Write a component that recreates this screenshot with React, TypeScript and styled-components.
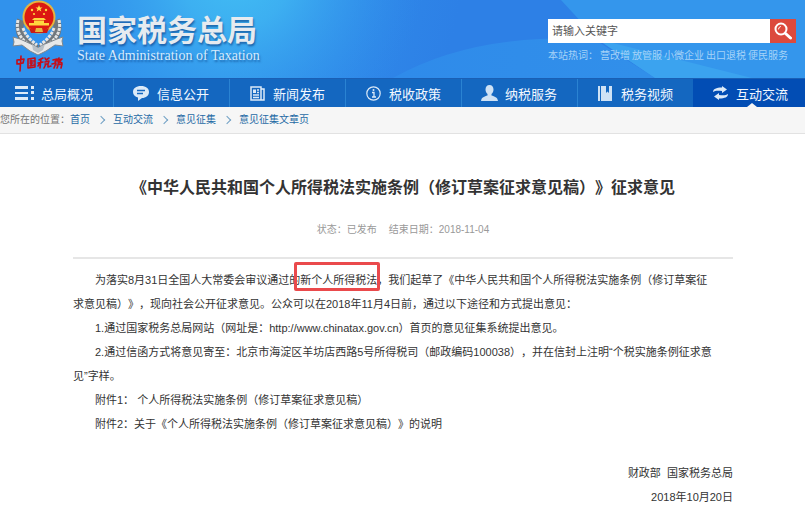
import React from "react";
import styled, { createGlobalStyle } from "styled-components";

const GlobalStyle = createGlobalStyle`
  * { box-sizing: border-box; }
  body {
    margin: 0;
    background: #fff;
    color: #333;
    font-family: "Liberation Sans", "Noto Sans CJK SC", sans-serif;
    text-spacing-trim: space-all;
    overflow-x: hidden;
  }
  h1, p, ul, ol { margin: 0; padding: 0; list-style: none; }
  a { color: inherit; text-decoration: none; }
`;

const Header = styled.header`
  position: relative;
  display: flex;
  justify-content: space-between;
  min-height: 78px;
  padding: 0 9px 0 12px;
  background: #2f8dea;
`;

const Backdrop = styled.svg`
  position: absolute;
  inset: 0;
  width: 100%;
  height: 100%;
`;

const Brand = styled.a`
  position: relative;
  display: flex;
  gap: 12px;
`;

const BrandText = styled.div`
  display: flex;
  flex-direction: column;
  padding-top: 14px;
  white-space: nowrap;
  text-shadow: 1px 2px 2px rgba(10, 60, 130, 0.6);
`;

const BrandName = styled.span`
  font-size: 30px;
  font-weight: 700;
  line-height: 34px;
  color: #e6ebf0;
`;

const BrandSub = styled.span`
  font-family: "Liberation Serif", serif;
  font-size: 14px;
  line-height: 15px;
  color: #d6eafc;
`;

const SearchArea = styled.div`
  position: relative;
  width: 248px;
  padding-top: 19px;
`;

const SearchForm = styled.form`
  display: flex;
  height: 24px;
`;

const SearchInput = styled.input`
  flex: 1;
  min-width: 0;
  padding: 0 4px;
  border: 0;
  border-radius: 0;
  background: #fff;
  font: 11px "Liberation Sans", "Noto Sans CJK SC", sans-serif;
  color: #555;
  &::placeholder { color: #555; opacity: 1; }
`;

const SearchButton = styled.button`
  display: flex;
  align-items: center;
  justify-content: center;
  width: 26px;
  padding: 0;
  border: 0;
  background: #dc4a3d;
`;

const HotWords = styled.p`
  display: flex;
  gap: 2px;
  margin-top: 5px;
  font-size: 10px;
  line-height: 16px;
  color: #a5d3f8;
  white-space: nowrap;
`;

const Nav = styled.nav`
  display: grid;
  grid-template-columns: 113fr repeat(5, 116fr) 112fr;
  border-top: 1px solid #1a5fb5;
  background: #1467c0;
`;

const NavItem = styled.a<{ $first?: boolean; $active?: boolean }>`
  position: relative;
  display: flex;
  align-items: center;
  gap: 4px;
  height: 28px;
  padding-left: ${(p) => (p.$first ? 13 : 15)}px;
  border-left: ${(p) => (p.$first || p.$active ? "0" : "1px solid #2a83d2")};
  background: ${(p) => (p.$active ? "#024db4" : "transparent")};
  color: #f2f8ff;
  font-size: 13px;
  white-space: nowrap;
  svg { display: block; }
`;

const IconSlot = styled.span`
  display: flex;
  justify-content: center;
  width: 24px;
`;

const Pointer = styled.i`
  position: absolute;
  left: 54px;
  bottom: 0;
  border: 5px solid transparent;
  border-top: 0;
  border-bottom: 4px solid #f6f6f6;
`;

const Crumbs = styled.nav`
  display: flex;
  align-items: center;
  height: 27px;
  border-bottom: 1px solid #e2e2e2;
  background: #f6f6f6;
  font-size: 10px;
  line-height: 16px;
  color: #777;
  white-space: nowrap;
  ol { display: flex; }
  li { display: flex; align-items: center; }
  li + li::before {
    content: "";
    width: 5px;
    height: 5px;
    margin: 0 9px 0 8px;
    border: solid #6f9fc4;
    border-width: 1px 1px 0 0;
    transform: rotate(45deg);
  }
  a { color: #1f6aa5; }
`;

const Article = styled.main`
  padding: 41px 72px 0 73px;
`;

const Title = styled.h1`
  font-size: 16px;
  line-height: 26px;
  font-weight: 700;
  text-align: center;
`;

const Meta = styled.p`
  display: flex;
  justify-content: center;
  gap: 12px;
  padding: 21px 0 19px;
  border-bottom: 2px solid #e6e6e6;
  font-size: 10px;
  line-height: 16px;
  color: #999;
`;

const Body = styled.div`
  padding-top: 9px;
  font-size: 11px;
  line-height: 24px;
`;

const Para = styled.p`
  text-indent: 2em;
  white-space: nowrap;
`;

const Marked = styled.span`
  position: relative;
`;

const MarkFrame = styled.span`
  position: absolute;
  inset: -12px -3px -5px -6px;
  border: 3px solid #ea4a4c;
  border-radius: 2px;
`;

const Signature = styled.div`
  padding-top: 25px;
  text-align: right;
`;

const Emblem = () => (
  <svg width="53" height="73" viewBox="0 0 53 73" aria-label="中国税务">
    <g fill="none" stroke="#70777d" strokeWidth="8">
      <path d="M9 20C4 33 12 43 25 49" />
      <path d="M44 20C49 33 41 43 28 49" />
    </g>
    <g fill="none" stroke="#e4e5e5" strokeWidth="3" strokeDasharray="3 1">
      <path d="M6 20C3 33 11 43 25 49" />
      <path d="M47 20C50 33 42 43 28 49" />
      <path d="M11 28C14 37 20 41 25 45" />
      <path d="M42 28C39 37 33 41 28 45" />
    </g>
    <path d="M1 37l7 2 11 5 7 4 7-4 12-5 6-2-1 4 1 5-8-1-9 6-8 4-8-4-8-6-9 1 1-4z" fill="#e8e9e9" stroke="#7f878d" />
    <path d="M20 44l6 4 7-4-2 6-5 3-5-3z" fill="#b7c0c7" />
    <circle cx="27" cy="17" r="16.500" fill="#e6b43e" />
    <circle cx="27" cy="17" r="14.500" fill="#dc1812" />
    <path d="M27 5l1 2.500h2.500l-2 1.500.8 2.500-2.300-1.500-2.300 1.500.8-2.500-2-1.500H26z" fill="#ffe24a" />
    <g fill="#ffd63f">
      <circle cx="20" cy="10" r="1.200" />
      <circle cx="34" cy="10" r="1.200" />
      <circle cx="22" cy="14" r="1.100" />
      <circle cx="32" cy="14" r="1.100" />
      <path d="M22 18h10l2 2H20zM22 20.500h10V23H22zM17 23h20v2.500H17z" />
    </g>
    <path d="M17 28q10 6 20 0l-2 5H19z" fill="#c91c13" />
    <path d="M24 28h6l1 4h-8z" fill="#e8b63f" />
    <g fill="none" stroke="#c60d18" strokeWidth="1.600" strokeLinecap="round" strokeLinejoin="round">
      <path d="M5 60l7-1-1 4-6 1zM9 56l-1 15" />
      <path d="M16 59l7-1 0 9-7 1zM18 61h4M19 60v5M18 63h3M18 66l4-1" />
      <path d="M27 60l4-2M26 63l5-1M29 59l-1 9M28 63l-2 3M33 58l1 2 3-2M33 62l4-1-1 3-3 0M34 64l-2 4M36 64l0 3 3-1" />
      <path d="M41 60l4-1-2 3M40 64l4-1-2 5M47 58l-2 3M46 60l4-1-4 4M46 61l4 2M45 65l5-1-1 4M47 63l-2 5" />
    </g>
  </svg>
);

const icons: Record<string, React.ReactNode> = {
  list: (
    <svg width="20" height="14" viewBox="0 0 20 14" fill="#dceaf8">
      <path d="M0 0h13v3H0zM0 6h13v2H0zM0 11h13v3H0zM16 0h3v3h-3zM16 5h3v3h-3zM16 11h3v3h-3z" />
    </svg>
  ),
  chat: (
    <svg width="16" height="15" viewBox="0 0 16 15">
      <path d="M8 0c5 0 8 2.500 8 6s-3 6-7 6l-4 3v-3.500C2 10.500 0 9 0 6c0-3.500 3-6 8-6z" fill="#dceaf8" />
      <path d="M4 4.500h8M4 7.500h6" stroke="#1467c0" strokeWidth="1.300" />
    </svg>
  ),
  news: (
    <svg width="15" height="15" viewBox="0 0 15 15" fill="none" stroke="#dceaf8" strokeWidth="1.500">
      <path d="M1 1h10v13H1zM11 3h3v11h-4M3 9h6M3 11.500h6M7 4h2M7 6.500h2" />
      <path d="M3 3.500h3v3.500H3z" fill="#dceaf8" stroke="none" />
    </svg>
  ),
  info: (
    <svg width="15" height="15" viewBox="0 0 15 15" fill="none" stroke="#dceaf8">
      <circle cx="7.500" cy="7.500" r="6.700" strokeWidth="1.200" />
      <path d="M6 6.500h2V11M6 11h4" strokeWidth="1.300" />
      <circle cx="7.500" cy="4" r="1" fill="#dceaf8" stroke="none" />
    </svg>
  ),
  user: (
    <svg width="17" height="16" viewBox="0 0 17 16" fill="#cfe2f5">
      <path d="M8.500 0C11 0 12.500 1.800 12.500 4.500c0 2-1 3.500-2 4.500v1.500c3 1 6 1.500 6.500 5.500H0c.5-4 3.500-4.500 6.500-5.500V9c-1-1-2-2.500-2-4.500C4.500 1.800 6 0 8.500 0z" />
    </svg>
  ),
  book: (
    <svg width="14" height="15" viewBox="0 0 14 15" fill="#cfe2f5">
      <path d="M0 0h2v15H0zM3 0h5v7l1.500-1.500L11 7V0h3v15H3z" />
    </svg>
  ),
  swap: (
    <svg width="15" height="14" viewBox="0 0 15 14" fill="#dceaf8">
      <path d="M0 6c0-3 3-4.500 9-4.500V0l5 3.500L9 7V5C5 4.500 2 4.500 0 6zM15 8c0 3-3 4.500-9 4.500V14l-5-3.500L6 7v2c4 .5 7 .5 9-1z" />
    </svg>
  ),
};

const navItems = [
  { icon: "list", label: "总局概况" },
  { icon: "chat", label: "信息公开" },
  { icon: "news", label: "新闻发布" },
  { icon: "info", label: "税收政策" },
  { icon: "user", label: "纳税服务" },
  { icon: "book", label: "税务视频" },
  { icon: "swap", label: "互动交流" },
];

const hotWords = ["营改增", "放管服", "小微企业", "出口退税", "便民服务"];
const crumbs = ["首页", "互动交流", "意见征集", "意见征集文章页"];

export default function App() {
  return (
    <>
      <GlobalStyle />
      <Header>
        <Backdrop viewBox="0 0 805 78" preserveAspectRatio="none" aria-hidden="true">
          <defs>
            <linearGradient id="base" gradientUnits="userSpaceOnUse" x1="240" y1="0" x2="450" y2="50">
              <stop offset="0" stopColor="#3192ec" />
              <stop offset="1" stopColor="#2d80e6" />
            </linearGradient>
            <radialGradient id="glow" gradientUnits="userSpaceOnUse" cx="235" cy="-30" r="190">
              <stop offset="0" stopColor="#42bff4" />
              <stop offset="0.300" stopColor="#3fb5f2" stopOpacity="0.850" />
              <stop offset="1" stopColor="#3192ec" stopOpacity="0" />
            </radialGradient>
            <linearGradient id="disc" gradientUnits="userSpaceOnUse" x1="400" y1="0" x2="640" y2="0">
              <stop offset="0" stopColor="#2f8bea" />
              <stop offset="1" stopColor="#318fea" />
            </linearGradient>
          </defs>
          <rect width="805" height="78" fill="url(#base)" />
          <rect width="805" height="78" fill="url(#glow)" />
          <path d="M561 0H805V78H655L597 39z" fill="#3496ec" />
          <path d="M393 78Q455 43 540 39Q570 37 600 43L655 78z" fill="url(#disc)" />
          <path d="M597 39L752 78H655z" fill="#3ba3ef" />
        </Backdrop>
        <Brand href="#">
          <Emblem />
          <BrandText>
            <BrandName>国家税务总局</BrandName>
            <BrandSub>State Administration of Taxation</BrandSub>
          </BrandText>
        </Brand>
        <SearchArea>
          <SearchForm>
            <SearchInput aria-label="站内搜索" placeholder="请输入关键字" />
            <SearchButton type="submit" aria-label="搜索">
              <svg width="18" height="18" viewBox="0 0 18 18" fill="none" stroke="#fff" strokeLinecap="round">
                <circle cx="7" cy="7" r="5.500" strokeWidth="2" />
                <path d="M11.500 11.500l5 4.500" strokeWidth="3" />
                <path d="M4.500 7Q4.500 5 6.500 4.500" strokeWidth="1" />
              </svg>
            </SearchButton>
          </SearchForm>
          <HotWords>
            <span>本站热词：</span>
            {hotWords.map((w) => (
              <a href="#" key={w}>{w}</a>
            ))}
          </HotWords>
        </SearchArea>
      </Header>
      <Nav aria-label="主导航">
        {navItems.map((n, i) => {
          const active = i === navItems.length - 1;
          return (
            <NavItem href="#" key={n.label} $first={i === 0} $active={active}>
              <IconSlot>{icons[n.icon]}</IconSlot>
              {n.label}
              {active && <Pointer />}
            </NavItem>
          );
        })}
      </Nav>
      <Crumbs aria-label="位置">
        <span>您所在的位置：</span>
        <ol>
          {crumbs.map((c) => (
            <li key={c}><a href="#">{c}</a></li>
          ))}
        </ol>
      </Crumbs>
      <Article>
        <Title>《中华人民共和国个人所得税法实施条例（修订草案征求意见稿）》征求意见</Title>
        <Meta>
          <span>状态：已发布</span>
          <span>结束日期：2018-11-04</span>
        </Meta>
        <Body>
          <Para>
            为落实8月31日全国人大常委会审议通过的
            <Marked>新个人所得税法<MarkFrame /></Marked>
            ，我们起草了《中华人民共和国个人所得税法实施条例（修订草案征
            <br />
            求意见稿）》，现向社会公开征求意见。公众可以在2018年11月4日前，通过以下途径和方式提出意见：
          </Para>
          <Para>1.通过国家税务总局网站（网址是：http://www.chinatax.gov.cn）首页的意见征集系统提出意见。</Para>
          <Para>
            2.通过信函方式将意见寄至：北京市海淀区羊坊店西路5号所得税司（邮政编码100038），并在信封上注明“个税实施条例征求意
            <br />
            见”字样。
          </Para>
          <Para>附件1： 个人所得税法实施条例（修订草案征求意见稿）</Para>
          <Para>附件2：关于《个人所得税法实施条例（修订草案征求意见稿）》的说明</Para>
          <Signature>
            <p>财政部&nbsp; 国家税务总局</p>
            <p>2018年10月20日</p>
          </Signature>
        </Body>
      </Article>
    </>
  );
}
